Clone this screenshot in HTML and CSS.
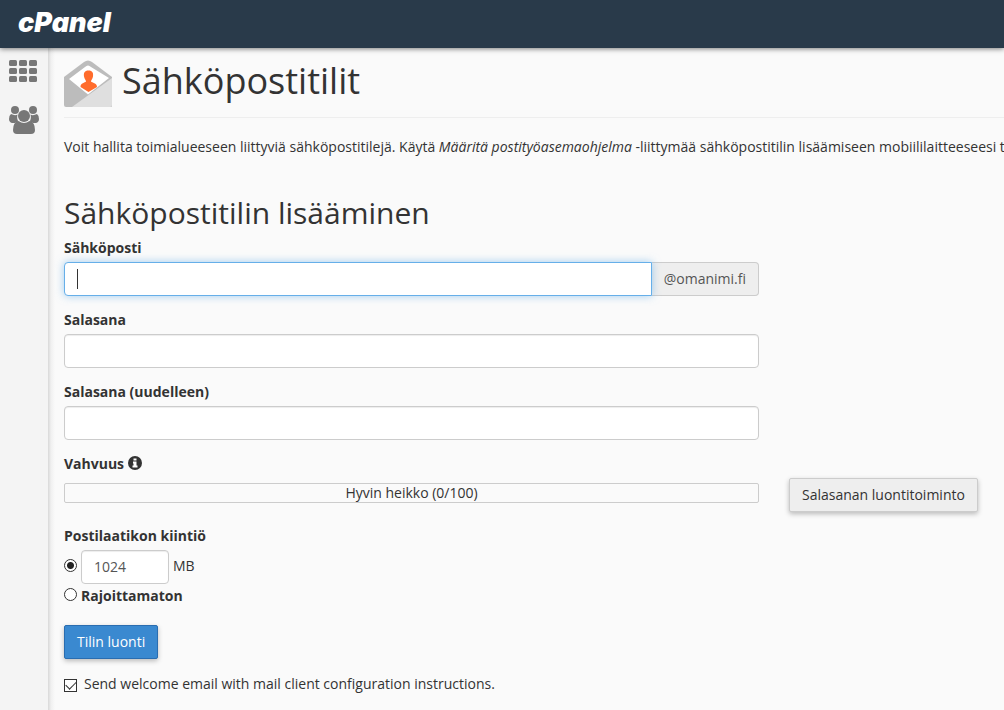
FILE: index.html
```html
<!DOCTYPE html>
<html lang="fi">
<head>
<meta charset="utf-8">
<title>cPanel - Sähköpostitilit</title>
<link rel="stylesheet" href="styles.css">
</head>
<body>
<header class="masthead"><a class="brand" href="#">cPanel</a></header>
<div class="shell">
  <nav class="sidebar" aria-label="cPanel">
    <a class="side-link" href="#" aria-label="Etusivu">
      <svg width="28" height="22" viewBox="0 0 28 22" fill="#777"><rect width="8" height="6" rx="1.5"/><rect x="10" width="8" height="6" rx="1.5"/><rect x="20" width="8" height="6" rx="1.5"/><rect y="8" width="8" height="6" rx="1.5"/><rect x="10" y="8" width="8" height="6" rx="1.5"/><rect x="20" y="8" width="8" height="6" rx="1.5"/><rect y="16" width="8" height="6" rx="1.5"/><rect x="10" y="16" width="8" height="6" rx="1.5"/><rect x="20" y="16" width="8" height="6" rx="1.5"/></svg>
    </a>
    <a class="side-link" href="#" aria-label="Käyttäjät">
      <svg width="30" height="28" viewBox="0 0 30 28" fill="#777"><circle cx="6" cy="4" r="4"/><circle cx="24" cy="4" r="4"/><path d="M2 8Q6 10 8.500 8.500Q7.500 13 9.500 15.500Q7.500 16 6 17H3Q0 16 0 13Q0 9.500 2 8Z"/><path d="M28 8Q24 10 21.500 8.500Q22.500 13 20.500 15.500Q22.500 16 24 17H27Q30 16 30 13Q30 9.500 28 8Z"/><circle cx="15" cy="10" r="6"/><path d="M9.500 15Q15 19 20.500 15Q26 16 26 24Q26 28 22 28H8Q4 28 4 24Q4 16 9.500 15Z"/></svg>
    </a>
  </nav>
  <main class="content">
    <div class="page-header">
      <svg class="page-icon" width="48" height="48" viewBox="0 0 48 48" aria-hidden="true"><path d="M0 17L20 2Q24-1 28 2L48 17V46Q48 47 47 47H2Q0 47 0 45Z" fill="#bcbcbc"/><path d="M48 18V45Q48 47 46 47H8Z" fill="#dfdfdf"/><path d="M5 19L21 7Q24 4 27 7L45 18L24 34.500Z" fill="#fff"/><path d="M24.500 10.500C28.500 10.500 29.500 13 29 16.500C28.500 19.500 27 20 27 21.500C28 23 33 22.500 33 27L24.500 32L16.500 27C16.500 22.500 21 23 22 21.500C22 20 20.500 19.500 20 16.500C19.500 13 20.500 10.500 24.500 10.500Z" fill="#ff6c2c"/></svg>
      <h1 class="page-title">Sähköpostitilit</h1>
    </div>
    <p class="intro">Voit hallita toimialueeseen liittyviä sähköpostitilejä. Käytä <em>Määritä postityöasemaohjelma</em> -liittymää sähköpostitilin lisäämiseen mobiililaitteeseesi t</p>
    <h2 class="section-title">Sähköpostitilin lisääminen</h2>
    <form class="account-form">
      <div class="group">
        <label class="label" for="email">Sähköposti</label>
        <div class="input-group">
          <input class="control control-active" id="email" type="text">
          <span class="addon">@omanimi.fi</span>
        </div>
      </div>
      <div class="group">
        <label class="label" for="password">Salasana</label>
        <input class="control" id="password" type="password">
      </div>
      <div class="group">
        <label class="label" for="password2">Salasana (uudelleen)</label>
        <input class="control" id="password2" type="password">
      </div>
      <div class="group strength">
        <span class="label">Vahvuus
          <svg class="info" width="14" height="14" viewBox="0 0 14 14" aria-hidden="true"><circle cx="7" cy="7" r="7" fill="#333"/><path d="M5.500 2.500H8.500V4.500H5.500ZM5 5.500H8.500V9.500H9.500V11.500H4.500V9.500H5.500V7.500H5Z" fill="#fff"/></svg>
        </span>
        <div class="strength-row">
          <div class="meter">Hyvin heikko (0/100)</div>
          <button class="button button-default" type="button">Salasanan luontitoiminto</button>
        </div>
      </div>
      <fieldset class="group quota">
        <legend class="label">Postilaatikon kiintiö</legend>
        <div class="quota-row">
          <input class="radio" type="radio" name="quota" aria-label="Kiintiö" checked>
          <input class="control control-quota" type="text" value="1024" aria-label="Kiintiö (MB)">
          <span class="unit">MB</span>
        </div>
        <div class="quota-row quota-unlimited">
          <input class="radio" id="unlimited" type="radio" name="quota">
          <label class="strong" for="unlimited">Rajoittamaton</label>
        </div>
      </fieldset>
      <button class="button button-primary" type="button">Tilin luonti</button>
      <div class="welcome">
        <input class="checkbox" id="welcome" type="checkbox" checked>
        <label for="welcome">Send welcome email with mail client configuration instructions.</label>
      </div>
    </form>
  </main>
</div>
</body>
</html>
```
FILE: styles.css
```css
* { box-sizing: border-box; }
body {
  margin: 0;
  min-height: 100vh;
  display: flex;
  flex-direction: column;
  background: #fafafa;
  color: #333;
  font: 14px/20px "Open Sans", sans-serif;
  overflow-x: hidden;
}
.masthead {
  display: flex;
  align-items: center;
  height: 48px;
  padding: 0 18px 2px;
  background: #293a4a;
  box-shadow: 0 1px 5px rgba(0, 0, 0, .5);
  z-index: 1;
}
.brand {
  color: #fff;
  font: italic 900 27px/32px Inter, sans-serif;
  text-decoration: none;
}
.shell { display: flex; flex: 1; }
.sidebar {
  display: flex;
  flex: none;
  flex-direction: column;
  gap: 24px;
  width: 48px;
  padding: 12px 9px;
  background: #f4f4f4;
}
.side-link { display: block; }
.side-link svg { display: block; }
.content {
  flex: 1;
  min-width: 0;
  padding: 12px 0 12px 16px;
  overflow: hidden;
  background: linear-gradient(to right, #d8d8d8, #f0f0f0 3px, #fafafa 7px);
}
.page-header {
  display: flex;
  gap: 10px;
  height: 58px;
  border-bottom: 1px solid #eee;
}
.page-icon { flex: none; }
.page-title {
  margin: 0;
  font-size: 36px;
  font-weight: 400;
  line-height: 42px;
}
.intro { margin: 19px 0 39px; white-space: nowrap; }
.section-title {
  margin: 0 0 9px;
  font-size: 30px;
  font-weight: 400;
  line-height: 33px;
}
.account-form { max-width: 695px; }
.group { margin: 0 0 14px; }
.label {
  display: block;
  margin-bottom: 4px;
  padding: 0;
  font-weight: 700;
}
.strong { font-weight: 700; }
.info { vertical-align: -1px; }
.control {
  display: block;
  width: 100%;
  height: 34px;
  padding: 6px 12px;
  border: 1px solid #ccc;
  border-radius: 4px;
  outline: 0;
  background: #fff;
  color: #555;
  font: inherit;
  box-shadow: inset 0 1px 1px rgba(0, 0, 0, .075);
}
.input-group { display: flex; }
.control-active {
  flex: 1;
  min-width: 0;
  border-color: #66afe9;
  border-radius: 4px 0 0 4px;
  background: linear-gradient(#333, #333) 12px center / 1px 20px no-repeat #fff;
  box-shadow: 0 0 8px rgba(102, 175, 233, .6);
  z-index: 1;
}
.addon {
  padding: 6px 12px;
  border: 1px solid #ccc;
  border-left: 0;
  border-radius: 0 4px 4px 0;
  background: #eee;
  color: #555;
}
.strength-row { display: flex; align-items: flex-start; gap: 30px; width: max-content; min-width: 100%; }
.strength { container-type: inline-size; }
.meter {
  flex: none;
  width: 100cqw;
  height: 20px;
  margin-top: 5px;
  border: 1px solid #ccc;
  border-radius: 2px;
  line-height: 18px;
  text-align: center;
}
.button {
  height: 34px;
  padding: 6px 12px;
  border: 1px solid #ccc;
  border-radius: 2px;
  font: inherit;
  white-space: nowrap;
  box-shadow: 0 2px 5px rgba(0, 0, 0, .26);
}
.button-default { background: #eee; color: #333; }
.button-primary {
  display: block;
  border-color: #2a6db0;
  background: #3a89d0;
  color: #fff;
}
.quota { margin-bottom: 19px; padding: 0; border: 0; }
.quota-row { display: flex; align-items: center; gap: 4px; }
.quota-unlimited { margin-top: 2px; }
.control-quota { width: 88px; padding-bottom: 8px; }
.unit { padding-bottom: 2px; }
.radio, .checkbox {
  flex: none;
  appearance: none;
  width: 13px;
  height: 13px;
  margin: 0 0 4px;
  border: 1px solid #333;
  background: #fff;
}
.radio { border-radius: 50%; }
.radio:checked { background: radial-gradient(circle, #222 3px, #fff 4px); }
.welcome { display: flex; align-items: center; gap: 7px; margin-top: 15px; }
.checkbox {
  display: grid;
  place-items: center;
  margin: 2px 0 0;
}
.checkbox:checked::after {
  content: "";
  width: 9px;
  height: 5px;
  border: solid #333;
  border-width: 0 0 1px 1px;
  transform: translateY(-1px) rotate(-45deg);
}
```
